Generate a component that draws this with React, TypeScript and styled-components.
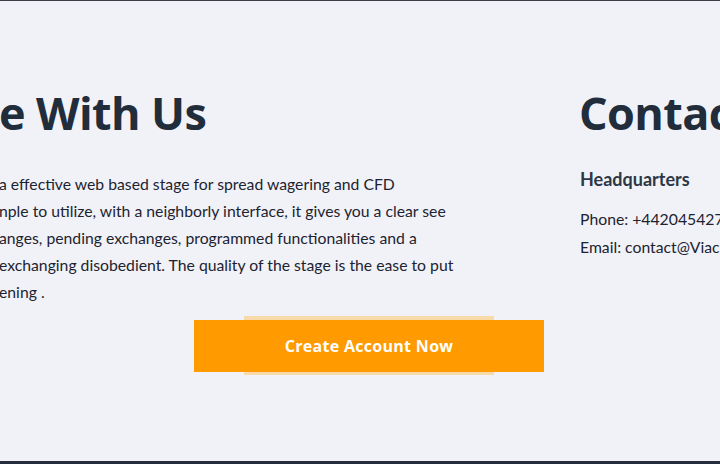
import React from 'react'
import styled, { createGlobalStyle } from 'styled-components'

const colors = {
  page: '#f1f2f8',
  ink: '#222d3b',
  text: '#1d2330',
  orange: '#ff9a00',
  orangeSoft: '#f8d9a9',
  footer: '#232d3b',
}

const GlobalStyle = createGlobalStyle`
  html, body {
    margin: 0;
    padding: 0;
    background: ${colors.page};
  }
  * {
    box-sizing: border-box;
  }
`

const Page = styled.div`
  width: 720px;
  height: 464px;
  overflow: hidden;
  display: flex;
  flex-direction: column;
  border-top: 1px solid #3b4048;
  background: ${colors.page};
`

const Section = styled.section`
  flex: 1;
  display: grid;
  grid-template-columns: 544px 1fr;
  column-gap: 36px;
  padding-top: 82px;
  white-space: nowrap;
`

const Column = styled.div`
  display: flex;
  flex-direction: column;
  min-width: 0;
`

const Title = styled.h2`
  margin: 0 0 0 -1px;
  font-family: 'Open Sans', 'Liberation Sans', sans-serif;
  font-weight: 700;
  font-size: 45px;
  letter-spacing: -0.6px;
  line-height: 60px;
  color: ${colors.ink};
`

const Lines = styled.p`
  margin: 27px 0 0 -1px;
  font-family: Lato, 'Liberation Sans', sans-serif;
  font-size: 15.75px;
  line-height: 27px;
  color: ${colors.text};
`

const Line = styled.span`
  display: block;
`

const CreateButton = styled.button`
  position: relative;
  align-self: flex-end;
  margin-top: 15px;
  width: 350px;
  height: 52px;
  padding: 0;
  border: 0;
  background: ${colors.orange};
  color: #fff;
  font-family: 'Open Sans', 'Liberation Sans', sans-serif;
  font-weight: 700;
  font-size: 16px;
  letter-spacing: 0.3px;
  cursor: pointer;

  &::before {
    content: '';
    position: absolute;
    left: 50px;
    right: 50px;
    top: -4px;
    bottom: -3px;
    background: ${colors.orangeSoft};
    z-index: 0;
  }
`

const ButtonFace = styled.span`
  position: absolute;
  inset: 0;
  background: ${colors.orange};
  z-index: 0;
`

const ButtonLabel = styled.span`
  position: relative;
  z-index: 1;
`

const SubTitle = styled.h3`
  margin: 24px 0 0;
  font-family: Lato, 'Liberation Sans', sans-serif;
  font-weight: 700;
  font-size: 18px;
  line-height: 24px;
  color: #2d3746;
`

const Info = styled.div`
  margin-top: 14px;
  font-family: Lato, 'Liberation Sans', sans-serif;
  font-size: 15.75px;
  line-height: 28px;
  color: ${colors.text};
`

const Footer = styled.footer`
  height: 3px;
  background: ${colors.footer};
`

export default function App() {
  return (
    <Page>
      <GlobalStyle />
      <Section>
        <Column>
          <Title>e With Us</Title>
          <Lines>
            <Line>a effective web based stage for spread wagering and CFD</Line>
            <Line>nple to utilize, with a neighborly interface, it gives you a clear see</Line>
            <Line>anges, pending exchanges, programmed functionalities and a</Line>
            <Line>exchanging disobedient. The quality of the stage is the ease to put</Line>
            <Line>ening .</Line>
          </Lines>
          <CreateButton>
            <ButtonFace />
            <ButtonLabel>Create Account Now</ButtonLabel>
          </CreateButton>
        </Column>
        <Column>
          <Title>Contact</Title>
          <SubTitle>Headquarters</SubTitle>
          <Info>
            <div>Phone: +442045427</div>
            <div>Email: contact@Viac</div>
          </Info>
        </Column>
      </Section>
      <Footer />
    </Page>
  )
}
